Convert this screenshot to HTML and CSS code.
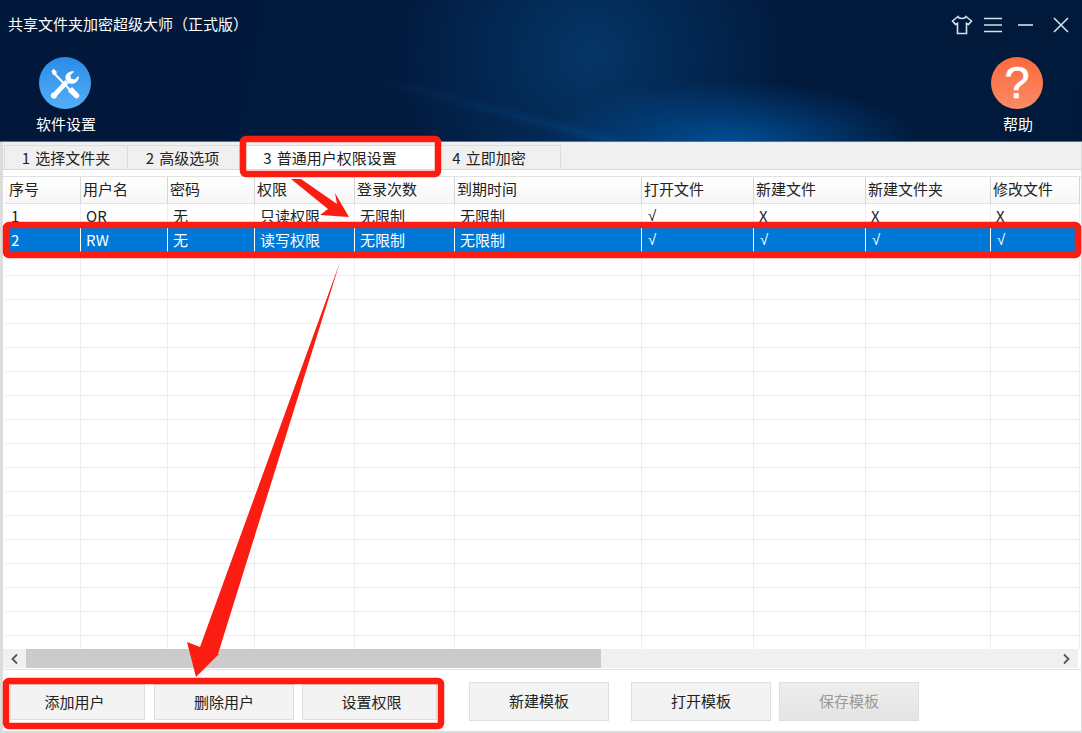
FILE: index.html
```html
<!DOCTYPE html>
<html lang="zh-CN">
<head>
<meta charset="utf-8">
<title>共享文件夹加密超级大师</title>
<link rel="stylesheet" href="styles.css">
</head>
<body>
<div class="app">
  <header class="hero">
    <div class="titlebar">
      <span class="title">共享文件夹加密超级大师（正式版）</span>
      <div class="winctl">
        <svg class="ctl shirt" viewBox="0 0 22 20"><path d="M7 1.500 1.500 6l3 3.500 2-1.200V18.500h9V8.300l2 1.200 3-3.500L15 1.500c-.8 2.600-7.200 2.600-8 0Z"/></svg>
        <svg class="ctl menu" viewBox="0 0 20 16"><path d="M1 1.500h18M1 8h18M1 14.500h18"/></svg>
        <svg class="ctl min" viewBox="0 0 18 16"><path d="M1 8h15"/></svg>
        <svg class="ctl close" viewBox="0 0 16 16"><path d="M1 1l14 14M15 1 1 15"/></svg>
      </div>
    </div>
    <div class="tools">
      <div class="tool">
        <div class="disc disc-blue">
          <svg class="tool-icon" viewBox="-1 -1 54 54">
            <path class="ws" d="M14 15 31 33"/>
            <path class="wf" d="M12 13.500l2.200-2.200 3.300 3.300-.4 1.900-1.700 1.400-2-.4Z"/>
            <path class="wf" d="M29 34.500l4.300-4.300 6.700 6.900c1.400 1.500 1.200 2.900 0 4-1.200 1.200-2.700 1.200-4 0Z"/>
            <path class="ws2" d="M15.500 38 28 24.500"/>
            <path class="wf" d="M27 23c-1.600-3.800.6-8 5.200-9 1.300-.3 2.500-.2 3.500.1l-4.200 3.900.9 3.500 3.700.9 4-4c.7 3.500-1.300 7-5 8.100-2.300.6-4.500.2-5.600-.8Z"/>
            <circle class="wf" cx="14.500" cy="39" r="3.200"/>
          </svg>
        </div>
        <span class="tool-label">软件设置</span>
      </div>
      <div class="tool">
        <div class="disc disc-orange"><span class="qmark">?</span></div>
        <span class="tool-label">帮助</span>
      </div>
    </div>
  </header>

  <main class="panel">
    <nav class="tabs">
      <span class="tab tab-1">1 选择文件夹</span>
      <span class="tab tab-2">2 高级选项</span>
      <span class="tab tab-3 active">3 普通用户权限设置</span>
      <span class="tab tab-4">4 立即加密</span>
    </nav>

    <div class="gridbox">
      <table class="grid">
        <colgroup>
          <col class="c1"><col class="c2"><col class="c3"><col class="c4"><col class="c5">
          <col class="c6"><col class="c7"><col class="c8"><col class="c9"><col class="c10">
        </colgroup>
        <thead>
          <tr><th>序号</th><th>用户名</th><th>密码</th><th>权限</th><th>登录次数</th><th>到期时间</th><th>打开文件</th><th>新建文件</th><th>新建文件夹</th><th>修改文件</th></tr>
        </thead>
        <tbody>
          <tr><td class="num">1</td><td>OR</td><td>无</td><td>只读权限</td><td>无限制</td><td>无限制</td><td class="chk">√</td><td>X</td><td>X</td><td>X</td></tr>
          <tr class="selected"><td class="num">2</td><td>RW</td><td>无</td><td>读写权限</td><td>无限制</td><td>无限制</td><td class="chk">√</td><td class="chk">√</td><td class="chk">√</td><td class="chk">√</td></tr>
          <tr><td></td><td></td><td></td><td></td><td></td><td></td><td></td><td></td><td></td><td></td></tr>
          <tr><td></td><td></td><td></td><td></td><td></td><td></td><td></td><td></td><td></td><td></td></tr>
          <tr><td></td><td></td><td></td><td></td><td></td><td></td><td></td><td></td><td></td><td></td></tr>
          <tr><td></td><td></td><td></td><td></td><td></td><td></td><td></td><td></td><td></td><td></td></tr>
          <tr><td></td><td></td><td></td><td></td><td></td><td></td><td></td><td></td><td></td><td></td></tr>
          <tr><td></td><td></td><td></td><td></td><td></td><td></td><td></td><td></td><td></td><td></td></tr>
          <tr><td></td><td></td><td></td><td></td><td></td><td></td><td></td><td></td><td></td><td></td></tr>
          <tr><td></td><td></td><td></td><td></td><td></td><td></td><td></td><td></td><td></td><td></td></tr>
          <tr><td></td><td></td><td></td><td></td><td></td><td></td><td></td><td></td><td></td><td></td></tr>
          <tr><td></td><td></td><td></td><td></td><td></td><td></td><td></td><td></td><td></td><td></td></tr>
          <tr><td></td><td></td><td></td><td></td><td></td><td></td><td></td><td></td><td></td><td></td></tr>
          <tr><td></td><td></td><td></td><td></td><td></td><td></td><td></td><td></td><td></td><td></td></tr>
          <tr><td></td><td></td><td></td><td></td><td></td><td></td><td></td><td></td><td></td><td></td></tr>
          <tr><td></td><td></td><td></td><td></td><td></td><td></td><td></td><td></td><td></td><td></td></tr>
          <tr><td></td><td></td><td></td><td></td><td></td><td></td><td></td><td></td><td></td><td></td></tr>
          <tr><td></td><td></td><td></td><td></td><td></td><td></td><td></td><td></td><td></td><td></td></tr>
          <tr><td></td><td></td><td></td><td></td><td></td><td></td><td></td><td></td><td></td><td></td></tr>
        </tbody>
      </table>
    </div>

    <div class="hscroll">
      <svg class="sarrow" viewBox="0 0 8 12"><path d="M6.500 1.500 2 6l4.500 4.500"/></svg>
      <div class="strack"><div class="sthumb"></div></div>
      <svg class="sarrow" viewBox="0 0 8 12"><path d="M1.500 1.500 6 6l-4.500 4.500"/></svg>
    </div>

    <div class="actions">
      <div class="btn-group">
        <button class="btn b-a">添加用户</button>
        <button class="btn b-b">删除用户</button>
        <button class="btn b-c">设置权限</button>
      </div>
      <button class="btn tpl t-new">新建模板</button>
      <button class="btn tpl t-open">打开模板</button>
      <button class="btn tpl t-save" disabled>保存模板</button>
    </div>
  </main>

  <svg class="annot" viewBox="0 0 1082 733">
    <rect class="frame" x="243" y="139" width="195" height="35" rx="3"/>
    <rect class="frame" x="6" y="225" width="1072" height="30" rx="3"/>
    <rect class="frame" x="6" y="681" width="435" height="45" rx="3"/>
    <path class="arrow" d="M291 179 301 179 337 204 335 193 349 217 320 215 328 209Z"/>
    <path class="arrow" d="M340 262 218 654 219 654 196 677 187 642 200 647Z"/>
  </svg>
</div>
</body>
</html>
```
FILE: styles.css
```css
* { box-sizing: border-box; }
html, body { margin: 0; padding: 0; }
body {
  width: 1082px;
  height: 733px;
  overflow: hidden;
  font-family: "Noto Sans CJK SC", "Liberation Sans", sans-serif;
  font-size: 15px;
  color: #222;
  background: #fff;
}
.app {
  position: relative;
  width: 1082px;
  height: 733px;
  display: flex;
  flex-direction: column;
}

/* header */
.hero {
  position: relative;
  overflow: hidden;
  height: 142px;
  flex: none;
  display: flex;
  flex-direction: column;
  color: #fff;
  background:
    radial-gradient(ellipse 190px 65px at 730px 145px, rgba(0, 82, 155, .95), rgba(0, 82, 155, 0) 100%),
    radial-gradient(ellipse 200px 190px at 590px 55px, rgba(5, 58, 110, .85), rgba(5, 58, 110, 0) 100%),
    linear-gradient(100deg, #01183a 0%, #011a3e 45%, #011a3c 100%);
  border-bottom: 1px solid #5d7187;
}
.hero::before {
  content: "";
  position: absolute;
  left: 335px;
  top: 103px;
  width: 290px;
  height: 6px;
  transform: rotate(14.700deg);
  background: linear-gradient(90deg, rgba(8, 80, 145, 0), rgba(8, 80, 145, .4));
  filter: blur(2.500px);
}
.titlebar {
  height: 48px;
  display: flex;
  align-items: center;
  justify-content: space-between;
  padding: 0 13px 0 8px;
}
.title { line-height: 48px; }
.winctl { display: flex; align-items: center; margin-top: 2px; }
.ctl { fill: none; stroke: #d5e0ea; stroke-width: 1.600; display: block; }
.shirt { width: 22px; height: 20px; margin-right: 10px; margin-left: 1px; }
.menu { width: 20px; height: 16px; margin-right: 14px; }
.min { width: 18px; height: 16px; margin-right: 18px; }
.close { width: 16px; height: 16px; }

.tools {
  display: flex;
  justify-content: space-between;
  padding: 9px 24px 0 26px;
}
.tool {
  width: 80px;
  display: flex;
  flex-direction: column;
  align-items: center;
}
.disc {
  width: 52px;
  height: 52px;
  margin-right: 2px;
  border-radius: 50%;
  display: flex;
  align-items: center;
  justify-content: center;
}
.disc-blue { background: linear-gradient(180deg, #2a8ce8, #55aef8); }
.disc-orange { background: linear-gradient(180deg, #fb6a3e, #fb8b66); }
.tool-icon { width: 52px; height: 52px; display: block; }
.wf { fill: #fff; stroke: none; }
.ws { stroke: #fff; stroke-width: 2.200; fill: none; }
.ws2 { stroke: #fff; stroke-width: 5; fill: none; }
.qmark {
  font-family: "Liberation Sans", sans-serif;
  font-weight: 400;
  font-size: 45px;
  line-height: 52px;
  color: #fff;
  -webkit-text-stroke: .7px #fff;
}
.tool-label { line-height: 20px; margin-top: 5px; }

/* panel */
.panel {
  flex: 1;
  min-height: 0;
  display: flex;
  flex-direction: column;
  background: #fff;
  border: solid #dcdcdc;
  border-width: 0 1px 2px 3px;
}
.tabs {
  height: 28px;
  flex: none;
  display: flex;
  align-items: flex-end;
  word-spacing: 2px;
  background: #f0f0f0;
  border-bottom: 1px solid #d9d9d9;
}
.tab {
  height: 24px;
  line-height: 23px;
  text-align: center;
  background: #f0f0f0;
  border: 1px solid #dcdcdc;
  border-bottom: 0;
  margin-left: -1px;
}
.tab-1 { width: 124px; margin-left: 1px; }
.tab-2 { width: 113px; padding-right: 2px; }
.tab-3 { width: 200px; background: #fff; padding-right: 18px; }
.tab-4 { width: 123px; padding-right: 21px; }

.gridbox {
  flex: none;
  height: 473px;
  margin-top: 6px;
  overflow: hidden;
  border-top: 1px solid #e2e2e2;
}
.grid {
  table-layout: fixed;
  border-collapse: separate;
  border-spacing: 0;
  width: 1075px;
  margin-left: 2px;
}
.c1 { width: 76px; }
.c2, .c3 { width: 87px; }
.c4, .c5 { width: 100px; }
.c6 { width: 187px; }
.c7, .c8 { width: 112px; }
.c9 { width: 125px; }
.c10 { width: 89px; }
.grid th, .grid td {
  padding: 0;
  overflow: hidden;
  white-space: nowrap;
  text-align: left;
  font-weight: 400;
  border-right: 1px solid #ededed;
  border-bottom: 1px solid #ededed;
}
.grid th {
  height: 27px;
  padding-left: 2px;
  padding-bottom: 2px;
  line-height: 24px;
  background: linear-gradient(180deg, #fff, #f6f6f6);
  border-right-color: #d6d6d6;
  border-bottom-color: #e2e2e2;
}
.grid th:first-child { padding-left: 4px; }
.grid td {
  height: 24px;
  line-height: 23px;
  padding-left: 5px;
}
.grid td.num { padding-left: 6px; }
.grid td.chk { font-family: "Liberation Sans", sans-serif; padding-left: 6px; }
.selected td {
  color: #fff;
  background: #0078d7;
  border-right-color: #fff;
  border-bottom-color: #0078d7;
}

/* scrollbar */
.hscroll {
  height: 19px;
  flex: none;
  display: flex;
  align-items: center;
  margin-right: 3px;
  background: #f0f0f0;
}
.sarrow {
  width: 23px;
  height: 12px;
  flex: none;
  fill: none;
  stroke: #555;
  stroke-width: 1.800;
}
.strack { flex: 1; height: 19px; }
.sthumb { width: 575px; height: 19px; background: #cbcbcb; }

/* buttons */
.actions {
  flex: 1;
  display: flex;
  align-items: flex-start;
  padding-top: 12px;
  border-top: 1px solid #e4e4e4;
  margin-top: 1px;
}
.btn-group {
  display: flex;
  width: 434px;
  margin: 0 25px 0 7px;
  padding-top: 2px;
}
.btn {
  font: inherit;
  color: #222;
  padding: 0 0 2px;
  background: #f3f3f3;
  border: 1px solid #dedede;
  border-radius: 0;
}
.btn-group .btn { height: 36px; }
.b-a { width: 135px; margin-right: 9px; padding-right: 6px; }
.b-b { width: 140px; margin-right: 8px; }
.b-c { width: 135px; padding-left: 4px; }
.tpl { width: 140px; height: 39px; }
.t-new { margin-right: 22px; }
.t-open { margin-right: 8px; }
.t-save {
  color: #999;
  background: linear-gradient(180deg, #eeeeee, #e4e4e4);
}

/* red hand-drawn annotations over the screenshot */
.annot {
  position: absolute;
  left: 0;
  top: 0;
  width: 1082px;
  height: 733px;
  pointer-events: none;
}
.frame { fill: none; stroke: #fb1d12; stroke-width: 6.500; }
.arrow { fill: #fb1d12; }
```
